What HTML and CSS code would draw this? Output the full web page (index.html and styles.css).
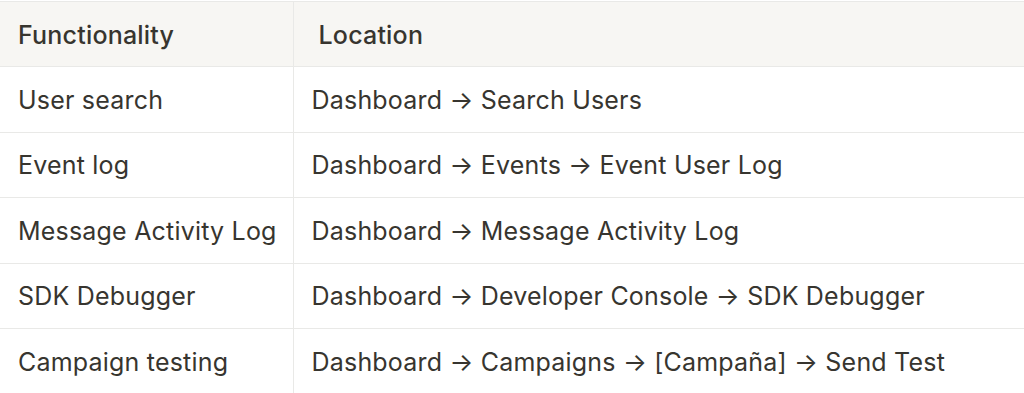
FILE: index.html
```html
<!DOCTYPE html>
<html>
<head>
<meta charset="utf-8">
<link rel="stylesheet" href="styles.css">
</head>
<body>
<table class="grid">
  <thead>
    <tr class="head-row">
      <th class="col-func">Functionality</th>
      <th class="col-loc head-loc">Location</th>
    </tr>
  </thead>
  <tbody>
    <tr><td class="col-func">User search</td><td class="col-loc">Dashboard → Search Users</td></tr>
    <tr><td class="col-func">Event log</td><td class="col-loc">Dashboard → Events → Event User Log</td></tr>
    <tr><td class="col-func">Message Activity Log</td><td class="col-loc">Dashboard → Message Activity Log</td></tr>
    <tr><td class="col-func">SDK Debugger</td><td class="col-loc">Dashboard → Developer Console → SDK Debugger</td></tr>
    <tr><td class="col-func">Campaign testing</td><td class="col-loc">Dashboard → Campaigns → [Campaña] → Send Test</td></tr>
  </tbody>
</table>
</body>
</html>
```
FILE: styles.css
```css
html, body {
  margin: 0;
  padding: 0;
  background: #ffffff;
}
body {
  padding-top: 1px;
  font-family: Inter, "Noto Sans", sans-serif;
  color: #37352f;
  overflow: hidden;
}
.grid {
  border-collapse: collapse;
  width: 1040px;
  table-layout: fixed;
  font-size: 25px;
  letter-spacing: 0.2px;
}
.grid th, .grid td {
  border-top: 1px solid #e9e9e7;
  border-bottom: 1px solid #e9e9e7;
  height: 64px;
  padding: 1px 0 0 18px;
  text-align: left;
  vertical-align: middle;
  white-space: nowrap;
  box-sizing: border-box;
}
.grid td { height: 65.5px; }
.head-row th {
  background: #f7f6f3;
  font-weight: 500;
  height: 65px;
}
.col-func {
  width: 293px;
  border-right: 1px solid #e9e9e7;
}
.col-loc { padding-left: 18px; }
.grid .head-loc { padding-left: 25px; }
```
